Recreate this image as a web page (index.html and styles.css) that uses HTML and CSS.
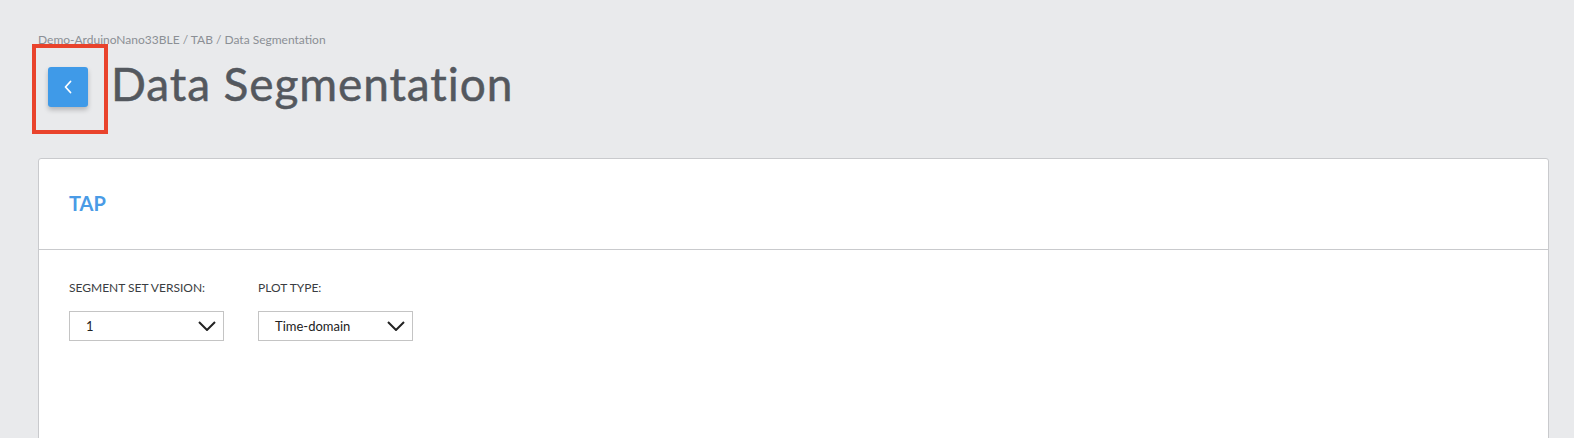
FILE: index.html
```html
<!DOCTYPE html>
<html lang="en">
<head>
    <meta charset="UTF-8">
    <meta name="viewport" content="width=device-width, initial-scale=1.0">
    <title>Data Segmentation</title>
    <link rel="stylesheet" href="styles.css">
</head>
<body>
    <div class="page">
        <div class="breadcrumb">Demo-ArduinoNano33BLE / TAB / Data Segmentation</div>
        <div class="title-row">
            <div class="highlight"></div>
            <button class="back-btn" aria-label="Back">
                <svg width="12" height="14" viewBox="0 0 12 14">
                    <path d="M8.5 1.5 L3.5 7 L8.5 12.5" fill="none" stroke="#fff" stroke-width="1.8" stroke-linecap="round" stroke-linejoin="round"/>
                </svg>
            </button>
            <h1>Data Segmentation</h1>
        </div>

        <div class="card">
            <div class="card-header">
                <h2>TAP</h2>
            </div>
            <div class="card-body">
                <div class="field">
                    <label>SEGMENT SET VERSION:</label>
                    <div class="select">
                        <span>1</span>
                        <svg width="18" height="10" viewBox="0 0 18 10">
                            <path d="M1 1 L9 9 L17 1" fill="none" stroke="#222" stroke-width="2"/>
                        </svg>
                    </div>
                </div>
                <div class="field">
                    <label>PLOT TYPE:</label>
                    <div class="select">
                        <span>Time-domain</span>
                        <svg width="18" height="10" viewBox="0 0 18 10">
                            <path d="M1 1 L9 9 L17 1" fill="none" stroke="#222" stroke-width="2"/>
                        </svg>
                    </div>
                </div>
            </div>
        </div>
    </div>
</body>
</html>
```

FILE: styles.css
```css
body {
    font-family: Lato, "Open Sans", sans-serif;
    margin: 0;
    padding: 0;
    background: #e9eaec;
    overflow: hidden;
}
.page {
    padding: 33px 25px 0 38px;
}
.breadcrumb {
    font-size: 12px;
    line-height: 14px;
    color: #8b8f95;
}
.title-row {
    position: relative;
    display: flex;
    align-items: flex-start;
    margin-top: 14px;
}
.highlight {
    position: absolute;
    left: -6px;
    top: -17px;
    width: 76px;
    height: 90px;
    border: 4px solid #e9432c;
    box-sizing: border-box;
}
.back-btn {
    width: 40px;
    height: 40px;
    margin: 6px 0 0 10px;
    border: none;
    border-radius: 3px;
    background: #3f9ae8;
    box-shadow: 0 3px 5px rgba(0, 0, 0, 0.22);
    display: flex;
    align-items: center;
    justify-content: center;
    padding: 0;
    cursor: pointer;
}
.title-row h1 {
    margin: 0 0 0 23px;
    font-size: 46px;
    line-height: 46px;
    font-weight: 400;
    letter-spacing: 0.9px;
    -webkit-text-stroke: 0.5px #54585e;
    color: #54585e;
}
.card {
    margin-top: 51px;
    background: #fff;
    border: 1px solid #c9cacd;
    border-radius: 3px;
}
.card-header {
    padding: 32px 30px 34px;
    border-bottom: 1px solid #c9cacd;
}
.card-header h2 {
    margin: 0;
    font-size: 20px;
    line-height: 24px;
    font-weight: 700;
    color: #4a9be6;
}
.card-body {
    display: flex;
    gap: 34px;
    padding: 30px 30px 200px;
}
.field label {
    display: block;
    font-size: 12px;
    line-height: 16px;
    color: #3a3d42;
    margin-bottom: 15px;
}
.select {
    width: 155px;
    height: 30px;
    box-sizing: border-box;
    border: 1px solid #c4c4c4;
    padding: 0 7px 0 16px;
    display: flex;
    align-items: center;
    justify-content: space-between;
    font-size: 13px;
    color: #222;
}
```
